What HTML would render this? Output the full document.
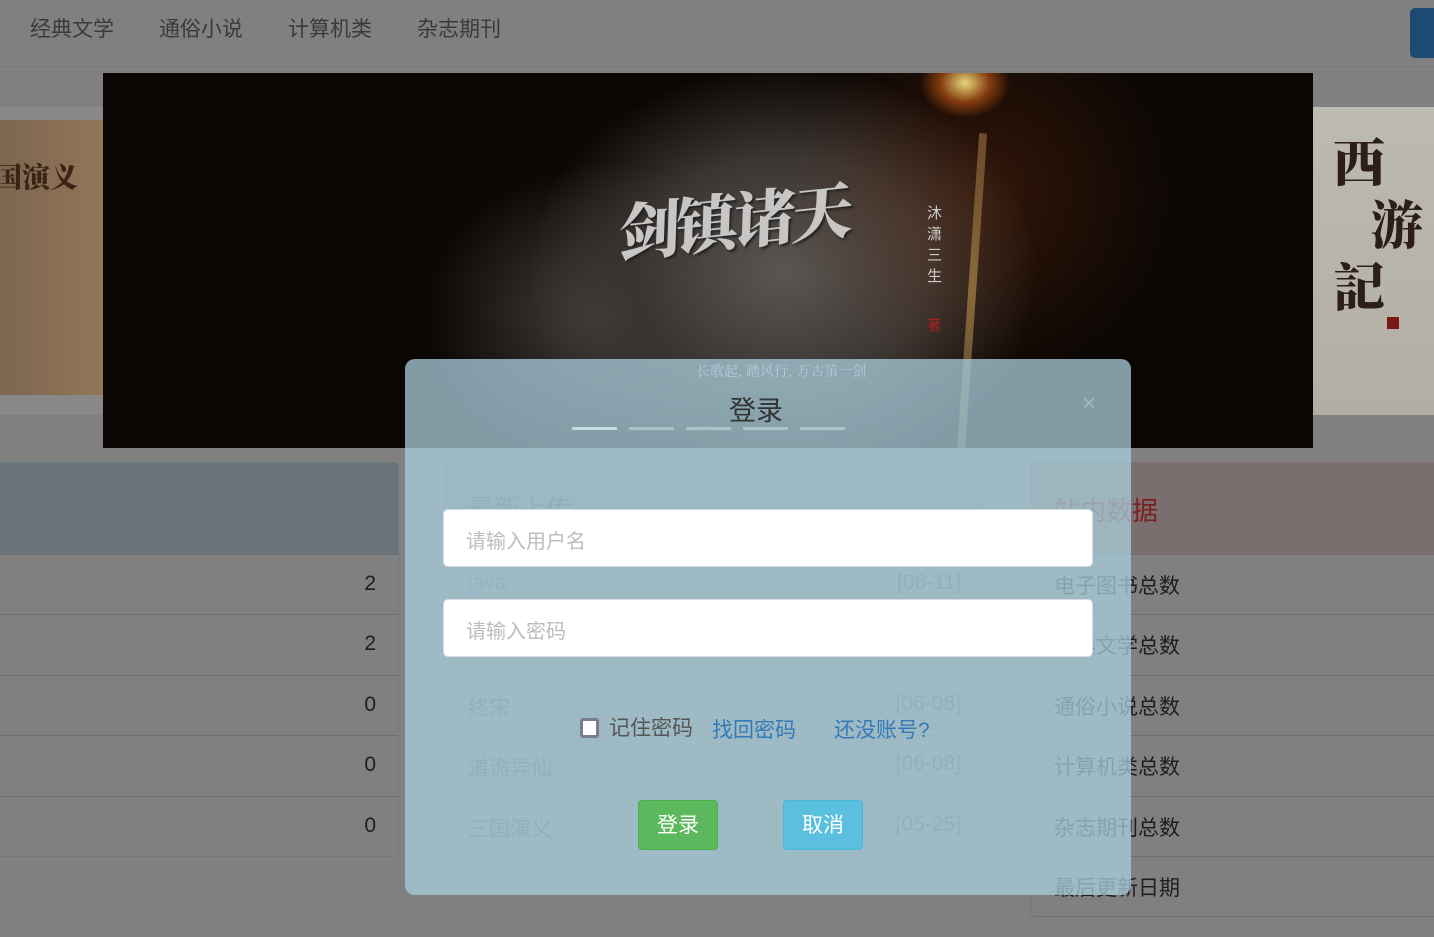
<!DOCTYPE html>
<html><head><meta charset="utf-8">
<style>
*{margin:0;padding:0;box-sizing:border-box}
body{width:1434px;height:937px;overflow:hidden;background:#808080;font-family:"Liberation Sans","Noto Sans CJK SC",sans-serif;position:relative}
.abs{position:absolute}
.nav{left:0;top:0;width:1434px;height:67px;border-bottom:1px solid #777;}
.nav span{position:absolute;top:13px;font-size:21px;color:#3a3a3a}
.panel{position:absolute;border:1px solid #6f7a80;border-radius:4px;overflow:hidden}
.row{position:absolute;left:0;right:0;height:60px;border-top:1px solid #6e6e6e;font-size:21px;color:#1e1e1e}
.modal{left:405px;top:359px;width:726px;height:536px;border-radius:10px;background:rgba(167,204,217,0.76)}
.inp{position:absolute;left:443px;width:650px;height:58px;background:#fff;border:1px solid #d6dbe0;border-radius:5px;font-size:20px;color:#bdbdbd;padding:15px 22px}
.dash{position:absolute;top:427px;height:3px;width:45px;background:rgba(200,220,226,0.55)}
.btn{position:absolute;top:800px;width:80px;height:50px;border-radius:4px;color:#fff;font-size:21px;text-align:center;line-height:50px}
</style></head><body>

<div class="abs nav">
<span style="left:30px">经典文学</span>
<span style="left:159px">通俗小说</span>
<span style="left:288px">计算机类</span>
<span style="left:417px">杂志期刊</span>
</div>
<div class="abs" style="left:1410px;top:8px;width:40px;height:50px;background:#1c4a72;border-radius:5px"></div>

<!-- left book -->
<div class="abs" style="left:0;top:107px;width:103px;height:308px;background:#888"></div>
<div class="abs" style="left:0;top:120px;width:103px;height:275px;background:linear-gradient(90deg,#7e6650,#927558);overflow:hidden">
<div style="position:absolute;left:-6px;top:36px;font-family:'Noto Serif CJK SC',serif;font-weight:900;font-size:28px;color:#3a2416">国演义</div>
</div>
<!-- right book -->
<div class="abs" style="left:1313px;top:107px;width:121px;height:308px;background:linear-gradient(180deg,#bdbab2,#b2aea4);overflow:hidden">
<div style="position:absolute;left:20px;top:22px;font-family:'Noto Serif CJK SC',serif;font-weight:900;font-size:52px;line-height:62px;color:#2c1e18;width:60px">西<br><span style="margin-left:38px">游</span><br>記</div>
<div style="position:absolute;left:74px;top:210px;width:12px;height:12px;background:#7a1818"></div>
</div>

<!-- banner -->
<div class="abs" style="left:103px;top:73px;width:1210px;height:375px;background:
radial-gradient(ellipse 45px 35px at 862px 10px,rgba(240,225,130,0.95),rgba(200,90,20,0.6) 55%,transparent 100%),
radial-gradient(ellipse 200px 200px at 880px 120px,rgba(140,60,20,0.3),transparent),
radial-gradient(ellipse 320px 260px at 680px 200px,#5a5652,#3a3532 45%,transparent 80%),
radial-gradient(ellipse 180px 150px at 500px 240px,#454140,transparent),
#0b0604;overflow:hidden">
<div style="position:absolute;left:515px;top:100px;font-family:'Noto Serif CJK SC',serif;font-weight:900;font-size:62px;color:#c8c6c4;transform:rotate(-6deg) skewX(-8deg);letter-spacing:-4px;text-shadow:2px 2px 2px #222">剑镇诸天</div>
<div style="position:absolute;left:824px;top:130px;width:16px;font-size:15px;line-height:21px;color:#ccc">沐潇三生</div>
<div style="position:absolute;left:824px;top:242px;width:16px;font-size:14px;color:#b02020">著</div>
<div style="position:absolute;left:593px;top:288px;font-size:14px;color:#ccc;font-family:'Noto Serif CJK SC',serif">长歌起, 踏风行, 万古第一剑</div>
<div style="position:absolute;left:865px;top:60px;width:8px;height:320px;background:linear-gradient(#6a4a2a,#8a6a3a,#4a3a2a);transform:rotate(4deg)"></div>
</div>

<!-- left panel -->
<div class="panel" style="left:-5px;top:462px;width:404px;height:395px">
<div style="position:absolute;left:0;top:0;right:0;height:91px;background:#6c747b"></div>
<div class="row" style="top:91px"><span style="position:absolute;right:22px;top:17px">2</span></div>
<div class="row" style="top:151px"><span style="position:absolute;right:22px;top:17px">2</span></div>
<div class="row" style="top:212px"><span style="position:absolute;right:22px;top:17px">0</span></div>
<div class="row" style="top:272px"><span style="position:absolute;right:22px;top:17px">0</span></div>
<div class="row" style="top:333px"><span style="position:absolute;right:22px;top:17px">0</span></div>
</div>

<!-- middle panel -->
<div class="panel" style="left:444px;top:462px;width:540px;height:395px;border-color:#777">
<div style="position:absolute;left:0;top:0;right:0;height:91px;background:#7a7a7a"></div>
<div style="position:absolute;left:23px;top:26px;font-size:26px;color:#555">最新上传</div>
<div class="row" style="top:91px"><span style="position:absolute;left:23px;top:16px;color:#3f6c8c">java</span><span style="position:absolute;right:22px;top:16px;color:#555">[06-11]</span></div>
<div class="row" style="top:151px"></div>
<div class="row" style="top:212px"><span style="position:absolute;left:23px;top:16px;color:#555">终宋</span><span style="position:absolute;right:22px;top:16px;color:#555">[06-08]</span></div>
<div class="row" style="top:272px"><span style="position:absolute;left:23px;top:16px;color:#555">道诡异仙</span><span style="position:absolute;right:22px;top:16px;color:#555">[06-08]</span></div>
<div class="row" style="top:333px"><span style="position:absolute;left:23px;top:16px;color:#555">三国演义</span><span style="position:absolute;right:22px;top:16px;color:#555">[05-25]</span></div>
</div>

<!-- right panel -->
<div class="panel" style="left:1030px;top:462px;width:420px;height:455px;border-color:#7e6e72">
<div style="position:absolute;left:0;top:0;right:0;height:91px;background:#7a6e6e"></div>
<div style="position:absolute;left:23px;top:28px;font-size:26px;color:#7a2020">站内数据</div>
<div class="row" style="top:91px"><span style="position:absolute;left:23px;top:15px">电子图书总数</span></div>
<div class="row" style="top:151px"><span style="position:absolute;left:23px;top:15px">经典文学总数</span></div>
<div class="row" style="top:212px"><span style="position:absolute;left:23px;top:15px">通俗小说总数</span></div>
<div class="row" style="top:272px"><span style="position:absolute;left:23px;top:15px">计算机类总数</span></div>
<div class="row" style="top:333px"><span style="position:absolute;left:23px;top:15px">杂志期刊总数</span></div>
<div class="row" style="top:393px"><span style="position:absolute;left:23px;top:15px">最后更新日期</span></div>
</div>

<!-- modal -->
<div class="abs modal"></div>
<div class="abs" style="left:705px;top:389px;width:102px;text-align:center;font-size:27px;color:#333">登录</div>
<div class="abs" style="left:1082px;top:390px;font-size:24px;color:#a9b6bb">×</div>
<div class="dash" style="left:572px;background:rgba(215,232,236,0.8)"></div>
<div class="dash" style="left:629px"></div>
<div class="dash" style="left:686px"></div>
<div class="dash" style="left:743px"></div>
<div class="dash" style="left:800px"></div>
<div class="inp" style="top:509px">请输入用户名</div>
<div class="inp" style="top:599px">请输入密码</div>
<div class="abs" style="left:580px;top:718px;width:19px;height:20px;background:#fff;border:3px solid #7a7d8a;border-radius:3px"></div>
<div class="abs" style="left:609px;top:712px;font-size:21px;color:#555">记住密码</div>
<div class="abs" style="left:712px;top:714px;font-size:21px;color:#337ab7">找回密码</div>
<div class="abs" style="left:834px;top:714px;font-size:21px;color:#337ab7">还没账号?</div>
<div class="btn" style="left:638px;background:#5cb85c;border:1px solid #4cae4c">登录</div>
<div class="btn" style="left:783px;background:#5bc0de;border:1px solid #46b8da">取消</div>
</body></html>
